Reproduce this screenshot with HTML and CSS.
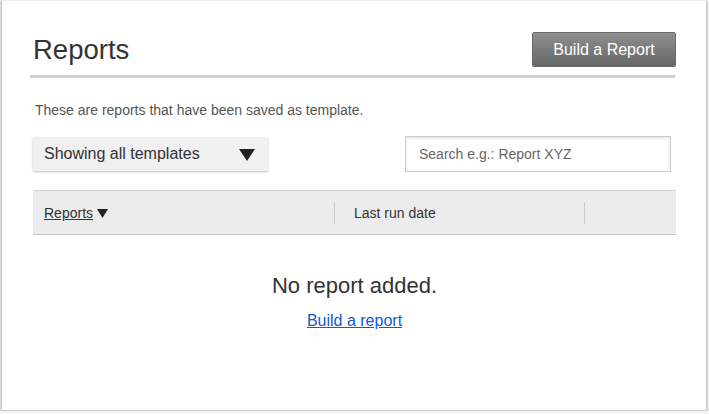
FILE: index.html
```html
<!DOCTYPE html>
<html>
<head>
<meta charset="utf-8">
<link rel="stylesheet" href="styles.css">
</head>
<body>
<div class="card">
  <div class="header">
    <h1 class="title">Reports</h1>
    <button class="btn">Build a Report</button>
  </div>
  <p class="desc">These are reports that have been saved as template.</p>
  <div class="controls">
    <div class="select">
      <span>Showing all templates</span>
      <svg class="caret" width="16" height="12" viewBox="0 0 16 12"><path d="M0 0H16L8 12Z" fill="#222"/></svg>
    </div>
    <div class="search">Search e.g.: Report XYZ</div>
  </div>
  <div class="thead">
    <div class="th th1"><a class="sort">Reports</a><svg class="sortcaret" width="11" height="9" viewBox="0 0 11 9"><path d="M0 0H11L5.5 9Z" fill="#222"/></svg></div>
    <div class="th th2">Last run date</div>
    <div class="th th3"></div>
  </div>
  <div class="empty">
    <div class="empty-msg">No report added.</div>
    <a class="empty-link" href="#">Build a report</a>
  </div>
</div>
</body>
</html>
```
FILE: styles.css
```css
html, body {
  margin: 0;
  padding: 0;
  background: #f4f4f4;
  font-family: "Liberation Sans", Arial, sans-serif;
}
.card {
  box-sizing: border-box;
  margin: 0 2px 0 1px;
  width: 706px;
  height: 411px;
  background: #fff;
  border: 1px solid #c8c8c8;
  border-top-color: #eee;
  box-shadow: 0 1px 2px rgba(0,0,0,0.35);
  padding: 0 30px 0 31px;
}
.header {
  display: flex;
  justify-content: space-between;
  align-items: flex-start;
  padding-top: 31px;
  height: 43px;
  border-bottom: 3px solid #d0d0d0;
  margin-left: -3px;
  margin-right: 1px;
  padding-left: 3px;
}
.title {
  margin: 3px 0 0;
  font-weight: normal;
  font-size: 27.5px;
  color: #333;
  line-height: 30px;
}
.btn {
  margin-right: -1px;
  width: 144px;
  height: 35px;
  border: 1px solid #6a6a6a;
  border-radius: 2px;
  background: linear-gradient(#8e8e8e, #676767);
  color: #fff;
  font-family: "Liberation Sans", Arial, sans-serif;
  font-size: 16px;
  padding: 0;
}
.desc {
  margin: 24px 0 0 2px;
  font-size: 14px;
  color: #555;
  line-height: 16px;
}
.controls {
  display: flex;
  justify-content: space-between;
  align-items: flex-start;
  margin-top: 18px;
}
.select {
  box-sizing: border-box;
  width: 235px;
  height: 34px;
  margin-top: 1px;
  background: #f0f0f0;
  box-shadow: 0 1px 2px rgba(0,0,0,0.25);
  display: flex;
  align-items: center;
  justify-content: space-between;
  padding: 0 13px 0 11px;
  font-size: 16px;
  color: #333;
}
.caret { margin-top: 1px; }
.search {
  box-sizing: border-box;
  width: 266px;
  height: 36px;
  margin-right: 5px;
  border: 1px solid #ccc;
  box-shadow: inset 0 1px 3px rgba(0,0,0,0.12);
  padding: 0 13px;
  display: flex;
  align-items: center;
  font-size: 14px;
  color: #666;
}
.thead {
  display: flex;
  margin-top: 18px;
  height: 45px;
  box-sizing: border-box;
  background: #ececec;
  border-top: 1px solid #d2d2d2;
  border-bottom: 1px solid #c8c8c8;
  align-items: center;
  font-size: 14px;
  color: #333;
}
.th {
  box-sizing: border-box;
  height: 22px;
  display: flex;
  align-items: center;
}
.th1 { width: 301px; padding-left: 11px; }
.th2 { width: 250px; padding-left: 19px; border-left: 1px solid #ccc; }
.th3 { flex: 1; border-left: 1px solid #ccc; }
.sort { text-decoration: underline; color: #333; }
.sortcaret { margin-left: 4px; margin-top: 1px; }
.empty {
  display: flex;
  flex-direction: column;
  align-items: center;
  padding-top: 38px;
}
.empty-msg {
  font-size: 22px;
  color: #333;
  line-height: 26px;
}
.empty-link {
  margin-top: 13px;
  font-size: 16px;
  color: #0b5bd3;
  text-decoration: underline;
}
```
